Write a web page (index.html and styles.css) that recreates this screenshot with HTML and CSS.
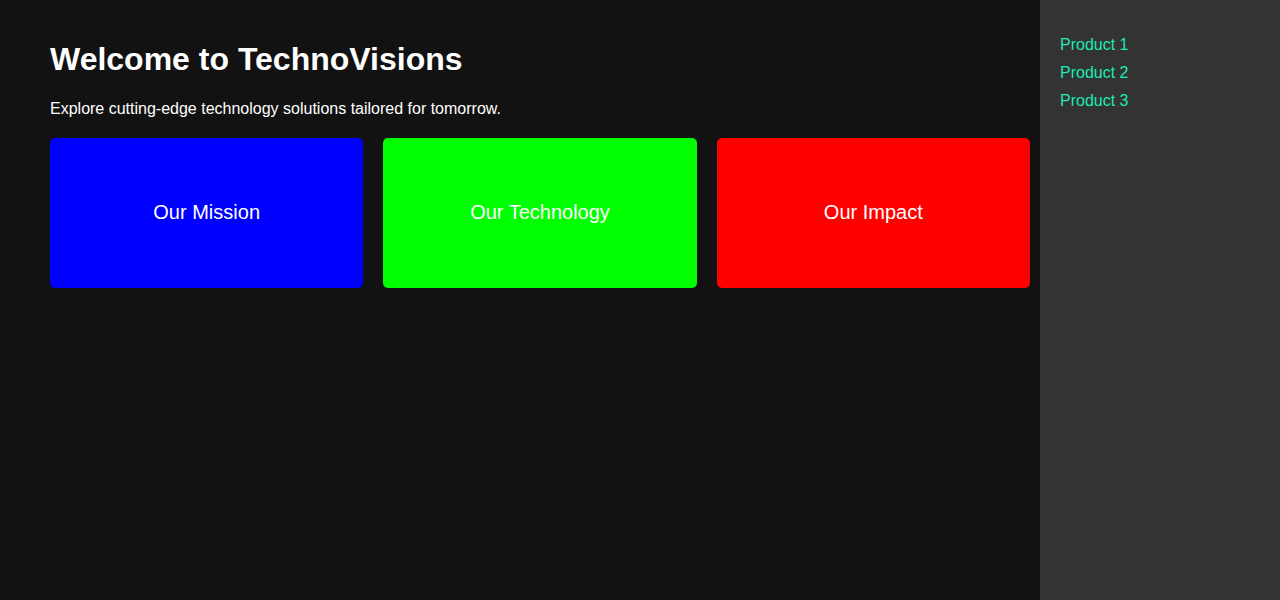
FILE: index.html
```html
<!DOCTYPE html>
<html lang="en">
<head>
<meta charset="utf-8">
<title>TechnoVisions</title>
<link rel="stylesheet" href="styles.css">
</head>
<body>
<main class="main">
  <h1 class="title">Welcome to TechnoVisions</h1>
  <p class="lead">Explore cutting-edge technology solutions tailored for tomorrow.</p>
  <div class="cards">
    <div class="card card-blue">Our Mission</div>
    <div class="card card-green">Our Technology</div>
    <div class="card card-red">Our Impact</div>
  </div>
</main>
<aside class="sidebar">
  <nav class="nav">
    <a class="nav-link" href="#">Product 1</a>
    <a class="nav-link" href="#">Product 2</a>
    <a class="nav-link" href="#">Product 3</a>
  </nav>
</aside>
</body>
</html>
```
FILE: styles.css
```css
html, body {
  margin: 0;
  height: 100%;
}
body {
  display: flex;
  font-family: "Liberation Sans", Arial, sans-serif;
  color: #ffffff;
  background: #121212;
}
.main {
  flex: 1;
  background: #121212;
  padding: 41px 10px 0 50px;
}
.title {
  margin: 0 0 22px;
  font-size: 32px;
  line-height: 37px;
  font-weight: bold;
}
.lead {
  margin: 0 0 20px;
  font-size: 16px;
  line-height: 18px;
}
.cards {
  display: grid;
  grid-template-columns: repeat(3, 1fr);
  gap: 20px;
}
.card {
  height: 150px;
  box-sizing: border-box;
  padding-bottom: 2px;
  border-radius: 5px;
  display: flex;
  align-items: center;
  justify-content: center;
  font-size: 20px;
  color: #ffffff;
}
.card-blue { background: #0000ff; }
.card-green { background: #00ff00; }
.card-red { background: #ff0000; }
.sidebar {
  width: 240px;
  flex: none;
  background: #333333;
  padding: 33px 20px;
  box-sizing: border-box;
}
.nav {
  display: flex;
  flex-direction: column;
  gap: 4px;
}
.nav-link {
  color: #1de9b6;
  text-decoration: none;
  font-size: 16px;
  line-height: 24px;
}
```
